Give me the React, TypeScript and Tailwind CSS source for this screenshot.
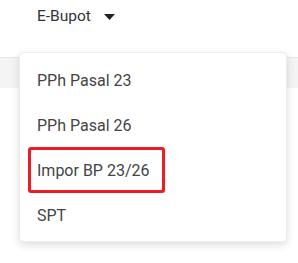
const ITEMS = ["PPh Pasal 23", "PPh Pasal 26", "Impor BP 23/26", "SPT"];

export default function App() {
  return (
    <div className="relative h-[263px] w-[298px] overflow-hidden bg-white font-['Roboto','Liberation_Sans',sans-serif] text-[#333]">
      <div className="flex h-[33px] items-center gap-[13px] pl-[37px] pt-[1px] text-[15.5px]">
        <span>E-Bupot</span>
        <svg width="11" height="6" viewBox="0 0 11 6" aria-hidden>
          <path d="M0 0h11L5.5 6z" fill="#222" />
        </svg>
      </div>
      <div className="mt-[24px] h-[31px] border-t border-[#e6e6e6] bg-[#f4f4f4]" />

      <div className="absolute left-[19px] top-[52px] w-[268px] rounded-[4px] border border-[#ececec] bg-white py-[4px] shadow-[0_3px_8px_rgba(0,0,0,0.13)]">
        {ITEMS.map((label, i) => (
          <div key={label} className="relative flex h-[45px] items-center pl-[17px] pt-[2px] text-[16px] text-[#444]">
            {label}
            {i === 2 ? (
              <span className="absolute left-[8px] top-0 h-[46px] w-[137px] rounded-[3px] border-[3px] border-[#ec1c24]" />
            ) : null}
          </div>
        ))}
      </div>
    </div>
  );
}
